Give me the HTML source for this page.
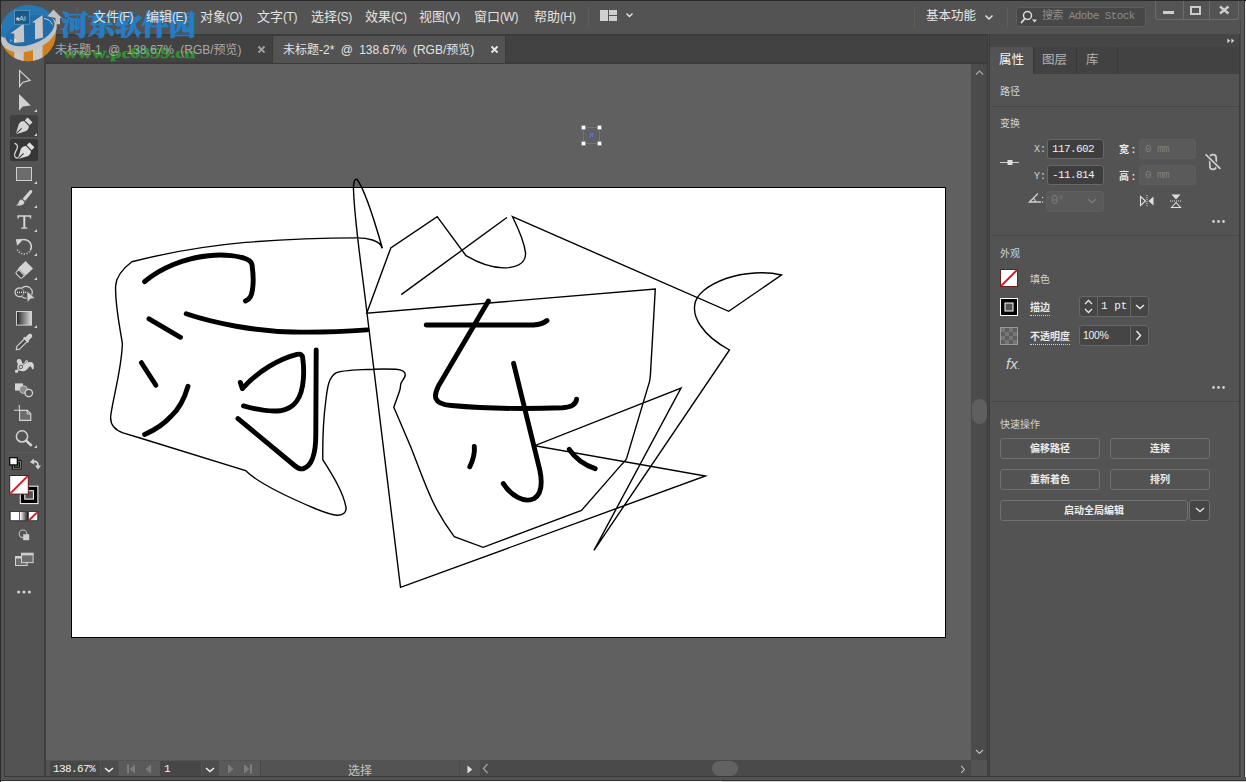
<!DOCTYPE html>
<html lang="zh-CN">
<head>
<meta charset="utf-8">
<title>Adobe Illustrator</title>
<style>
*{box-sizing:border-box;margin:0;padding:0}
html,body{width:1246px;height:782px;overflow:hidden;background:#535353}
body{position:relative;font-family:"Liberation Sans","Noto Sans CJK SC",sans-serif;font-size:12px;color:#dcdcdc}
.abs{position:absolute}
#menubar{left:0;top:0;width:1246px;height:34px;background:#535353}
#topedge{left:0;top:0;width:1246px;height:1px;background:#2a2a2a}
#leftedge{left:0;top:0;width:1px;height:782px;background:#2a2a2a}
#tabbar{left:46px;top:34px;width:943px;height:30px;background:#424242}
#canvas{left:46px;top:64px;width:925px;height:696px;background:#606060}
#artboard{left:71px;top:187px;width:875px;height:451px;background:#fff;border:1px solid #000}
.menu{top:9px;font-size:13px;color:#e2e2e2;white-space:nowrap;line-height:16px}
.tab{top:36px;height:27px;font-size:12px;line-height:28px;white-space:nowrap}

.p{font-size:10px;line-height:14px;white-space:nowrap;color:#d2d2d2}
.pb{font-weight:bold;color:#e8e8e8}
.inp{background:#3e3e3e;border:1px solid #686868;border-radius:3px;color:#f0f0f0;font-family:"Liberation Mono","Noto Sans CJK SC",monospace;font-size:11px;letter-spacing:-0.6px;line-height:18px;padding-left:4px;white-space:nowrap}
.inpd{background:#5a5a5a;border:1px solid #5e5e5e;border-radius:3px;color:#7e7e7e;font-family:"Liberation Mono","Noto Sans CJK SC",monospace;font-size:11px;letter-spacing:-0.6px;line-height:18px;padding-left:5px;white-space:nowrap}
.btn{border:1px solid #707070;border-radius:3px;height:21px;text-align:center;font-size:10px;line-height:19px;font-weight:bold;color:#ececec;white-space:nowrap}
.sep{left:991px;width:248px;height:1px;background:#474747}
.dot3{width:13px;height:3px}
.menu .l{font-size:12px;letter-spacing:-0.4px}
.tab{word-spacing:3px}
</style>
</head>
<body>
<div class="abs" id="menubar"></div>
<div class="abs" id="tabbar"></div>
<div class="abs" id="canvas"></div>
<div class="abs" id="artboard"></div>
<div class="abs" style="left:46px;top:34px;width:943px;height:2px;background:#3b3b3b"></div>
<div class="abs" style="left:46px;top:62px;width:943px;height:2px;background:#3b3b3b"></div>
<div class="abs" style="left:272px;top:36px;width:1px;height:26px;background:#3b3b3b"></div>
<div class="abs" style="left:505px;top:36px;width:1px;height:26px;background:#3b3b3b"></div>
<!-- artwork -->
<svg class="abs" style="left:46px;top:64px" width="924" height="696" viewBox="46 64 924 696">
<g fill="none" stroke="#000" stroke-width="1.4" stroke-linejoin="miter" stroke-linecap="butt">
<!-- blob around he -->
<path d="M382 248.3 C381 240 366 238 356.7 237.9 C320 238 282 239.5 245.5 242.4 C200 246.5 160 254.5 131.8 261.8 C121 270 116 278 115.6 286.1 C115 305 119.5 325 122.4 343.6 C121.5 370 113.5 395 110.7 416 C110 424 113.5 429.5 123 432.8 L140 438 L245.5 470.5 C258 483 290 498 315 508.5 C325 512.5 332 515 337 515.2 C343.5 515.5 347 512 345.8 506.5 C343 491 331 473 322.8 459.6 C322.6 445 323.2 420 325.9 400 C327.5 386 329 377 336 372.8 C342 369.8 380 368.4 396 369.3 C402 369.8 405.8 371.5 405.200 375.5 C404.6 378.5 401.6 381 400.9 383.5 C400.3 386 400.6 387 400.1 389 C398.6 395 395.6 401 393.8 407.5 C396 412 397.5 416 399.3 420 C403 429 407 438 410.8 447 C416.5 461.5 422 476.5 428.2 491.3 C435 508 444 523 454.2 536.6 L483.1 547.3 L581.5 510.4 L621.7 464.4 C624 462 626 460.5 626.6 458.4 L649.5 381.6 C650.3 378 650.5 374 650.7 370 L655.3 289 L366.7 313.2 L390.8 247.9 L437.2 216.7 L466 255.7 C480 264 496 269 508.8 267.6 C520 266 526 262 525.5 252.7 C524 240 518 228 512.5 216.7 L728.7 311.3 L781.4 275 C766 271 744 272.5 726 278.5 C708 285 695 295 694.6 306 C693.5 316 700 334 729.5 350 L594 550.3 L681 388 L534.7 445.7 L705.4 476 L400.5 587.4 L367 313 C362 270 354.8 225 353.5 190 C353.2 181 355 178.3 357 179.3 C364.500 189 376 226 382.4 248.3"/>
<path d="M401.2 294.6 L506.9 217.5"/>
</g>
<g fill="none" stroke="#000" stroke-width="4.9" stroke-linecap="round" stroke-linejoin="round">
<!-- he -->
<path d="M144.6 281.7 C160 268 185 258 208.4 255.7 C225 254 240 256 247.3 259.4 C251 261 252 263 252.1 265.7 C253 272 253.5 280 252.9 286.1 C252 296 250 299 245.5 301"/>
<path d="M186.2 313.8 C215 323.5 255 331.2 292.7 332 C315 332.5 345 331.5 367.1 329.9"/>
<path d="M149 318.8 L180.5 337.3"/>
<path d="M141.4 362.7 L155.9 385.3"/>
<path d="M188 386.3 C184 400 178 410 171.3 416 C164 424 155 430 144.6 434.5"/>
<path d="M240.3 382.4 L242.4 388.6 C258 371 280 358.5 297 354.4 C300.5 353.500 302.2 354.5 302.7 358 C303.7 365 303.9 372 303.4 378.8 C302 398 295 408.5 280 410.8 C268 412 256 409.5 243.5 405.9"/>
<path d="M316.2 350 L315.8 434.5 C315.8 455 311 466 303.500 468.6 C300.5 469.6 297.5 468 294.5 465.5 L238 418.6"/>
<!-- dong -->
<path d="M426.2 325 L533.500 325 C539 324.7 544 323 547 320.5"/>
<path d="M488.4 301 L438.3 386.3 C434 395 432 404 451.3 405.5 C490 409 530 409 562.6 407.8 C572 407 576 404 576.6 399.2"/>
<path d="M513.6 363.3 L539.8 470 C542.5 483 541.5 494 534 498.6 C524 503.5 511 495.5 503.3 483.6"/>
<path d="M474.3 446.4 C475 453 473 460 469.8 466.8"/>
<path d="M569.2 449.4 C575 458 584 465 595.2 468.7"/>
</g>
<!-- selection -->
<g fill="none" stroke="#5578d6" stroke-width="1" opacity="0.85">
<rect x="583.5" y="127.5" width="16" height="16"/>
<path d="M589.500 133 L593.500 137 M593.500 133 L589.500 137" stroke-width="1.300"/>
</g>
<g fill="#fff" stroke="#5a7be0" stroke-width="0.800">
<rect x="581.300" y="125.300" width="4.400" height="4.400"/><rect x="597.300" y="125.300" width="4.400" height="4.400"/><rect x="581.300" y="141.300" width="4.400" height="4.400"/><rect x="597.300" y="141.300" width="4.400" height="4.400"/>
</g>
</svg>
<div class="abs" style="left:61px;top:3.5px;font-family:'Noto Serif CJK SC','Noto Sans CJK SC',serif;font-weight:900;font-size:27px;line-height:40px;color:#1e84d6;-webkit-text-stroke:0.9px #1e84d6;opacity:0.88;white-space:nowrap">河东软件园</div>
<div class="abs" style="left:62.5px;top:42.6px;font-family:'Liberation Serif',serif;font-weight:bold;font-size:14.5px;line-height:20px;color:#2fa32f;-webkit-text-stroke:0.5px #2fa32f;opacity:0.78;white-space:nowrap;transform:scaleX(1.38);transform-origin:0 0">www.pc0359.cn</div>
<div class="abs" style="left:77px;top:7px;width:1px;height:20px;background:#5e5e5e"></div>
<!-- menu -->
<div class="abs menu" style="left:93px">文件<span class="l">(F)</span></div>
<div class="abs menu" style="left:146px">编辑<span class="l">(E)</span></div>
<div class="abs menu" style="left:200px">对象<span class="l">(O)</span></div>
<div class="abs menu" style="left:257px">文字<span class="l">(T)</span></div>
<div class="abs menu" style="left:311px">选择<span class="l">(S)</span></div>
<div class="abs menu" style="left:365px">效果<span class="l">(C)</span></div>
<div class="abs menu" style="left:419px">视图<span class="l">(V)</span></div>
<div class="abs menu" style="left:474px">窗口<span class="l">(W)</span></div>
<div class="abs menu" style="left:534px">帮助<span class="l">(H)</span></div>
<div class="abs" style="left:588px;top:7px;width:1px;height:20px;background:#5e5e5e"></div>
<svg class="abs" style="left:600px;top:10px" width="36" height="12" viewBox="0 0 36 12"><rect x="0" y="0" width="8" height="11" fill="#d0d0d0"/><rect x="9" y="0" width="8" height="5" fill="#d0d0d0"/><rect x="9" y="6" width="8" height="5" fill="#d0d0d0"/><path d="M26.5 3.5 L29.5 6.5 L32.5 3.5" fill="none" stroke="#e6e6e6" stroke-width="1.4"/></svg>
<!-- doc tabs -->
<div class="abs tab" style="left:46px;width:226px;color:#a8a8a8;padding-left:9px">未标题-1 @ 138.67% (RGB/预览)</div>
<div class="abs tab" style="left:273px;width:232px;background:#535353;color:#e4e4e4;padding-left:10px">未标题-2* @ 138.67% (RGB/预览)</div>
<svg class="abs" style="left:257px;top:45px" width="9" height="9" viewBox="0 0 9 9"><path d="M1.500 1.500 L7.500 7.500 M7.500 1.500 L1.500 7.500" stroke="#a0a0a0" stroke-width="1.800"/></svg>
<svg class="abs" style="left:490px;top:45px" width="9" height="9" viewBox="0 0 9 9"><path d="M1.500 1.500 L7.500 7.500 M7.500 1.500 L1.500 7.500" stroke="#e8e8e8" stroke-width="1.800"/></svg>
<div class="abs" style="left:505px;top:36px;width:1px;height:26px;background:#3b3b3b"></div>
<!-- toolbar -->
<div class="abs" style="left:1px;top:34px;width:45px;height:742px;background:#535353"></div>
<div class="abs" style="left:4px;top:34px;width:1px;height:742px;background:#3d3d3d"></div>
<div class="abs" style="left:44px;top:34px;width:2px;height:742px;background:#404040"></div>
<div class="abs" style="left:10px;top:115px;width:28px;height:22px;background:#404040;border-radius:2px"></div>
<div class="abs" style="left:10px;top:139px;width:28px;height:22px;background:#363636;border-radius:2px"></div>
<svg class="abs" style="left:0;top:64px" width="46" height="560" viewBox="0 64 46 560">
<g fill="#d4d4d4" stroke="none">
<!-- sub-tool corner triangles -->
<path d="M34 112h3v-3zM34 136h3v-3zM34 184h3v-3zM34 208h3v-3zM34 232h3v-3zM34 256h3v-3zM34 280h3v-3zM34 328h3v-3zM34 448h3v-3z"/>
</g>
<!-- selection -->
<path d="M19.6 70.6 L19.6 86.4 L23 82.2 L30 80.4 Z" fill="none" stroke="#d4d4d4" stroke-width="1.2" stroke-linejoin="miter"/>
<!-- direct selection -->
<path d="M19 94 L19 110.8 L22.8 106.4 L30.8 105.4 Z" fill="#d0d0d0"/>
<!-- pen -->
<g transform="translate(24,126) rotate(45)" fill="#d6d6d6">
<path d="M-0.700 10.500 L-5.100 2 C-5.700 -0.500 -4.400 -2.600 -3.500 -3.400 L3.500 -3.400 C4.400 -2.600 5.700 -0.500 5.100 2 L0.700 10.500 Z"/>
<rect x="-3.500" y="-8.500" width="7" height="3.900" rx="0.500"/>
<path d="M0 10.500 L0 3.400" stroke="#404040" stroke-width="1.100" fill="none"/>
</g>
<!-- curvature -->
<g transform="translate(26,150.900) rotate(45)" fill="#dedede">
<path d="M-0.700 10.500 L-5.100 2 C-5.700 -0.500 -4.400 -2.600 -3.500 -3.400 L3.500 -3.400 C4.400 -2.600 5.700 -0.500 5.100 2 L0.700 10.500 Z"/>
<rect x="-3.500" y="-8.500" width="7" height="3.900" rx="0.500"/>
<path d="M0 10.500 L0 3.400" stroke="#363636" stroke-width="1.100" fill="none"/>
</g>
<path d="M15 143.400 C17.600 144.600 18.200 146.600 16.600 149.600 C14.600 153 13.400 155.600 15.400 157.200 C16.200 157.800 17.200 158 18 157.900" fill="none" stroke="#dedede" stroke-width="1.200" stroke-linecap="round"/>
<!-- rectangle -->
<rect x="16.5" y="167.5" width="15" height="13" fill="#6c6c6c" stroke="#d0d0d0" stroke-width="1"/>
<!-- brush -->
<g fill="#d4d4d4">
<path d="M31.6 190.2 C32.6 190.8 32.4 192 31.8 192.8 L25.2 201 L22.6 198.8 L29.4 190.8 C30 190 31 189.8 31.6 190.2 Z"/>
<path d="M21.8 199.6 L24.4 201.8 C24.6 204 22.6 205.6 20 205.4 C18.6 205.4 17 205.8 15.8 205.4 C17.8 204.6 18.4 203.6 18.8 202 C19.2 200.4 20.4 199.4 21.8 199.6 Z"/>
</g>
<!-- type -->
<path d="M17.4 215.2 H31.2 V218.6 H29.8 V216.8 H25.3 V227.4 H27.4 V228.8 H21.2 V227.4 H23.3 V216.8 H18.8 V218.6 H17.4 Z" fill="#d4d4d4"/>
<!-- rotate -->
<path d="M18.600 242 A7.300 7.300 0 0 1 31.300 246.600 A7.300 7.300 0 0 1 30.300 250.300" fill="none" stroke="#d4d4d4" stroke-width="1.600"/>
<path d="M29.600 251.400 A7.300 7.300 0 0 1 16.900 248.300" fill="none" stroke="#d4d4d4" stroke-width="1.500" stroke-dasharray="1.100 1.600"/>
<path d="M15.800 239.300 L22.400 239 L20.600 242.200 L17.200 245.800 Z" fill="#d4d4d4"/>
<!-- eraser -->
<path d="M25.500 261 L33 268.500 L25.600 275.600 L18.200 268.200 Z" fill="#d4d4d4"/>
<path d="M18.600 269.400 L24.600 275.600 L22 277.900 C21.500 278.300 20.800 278.300 20.300 277.800 L16.400 273.800 C15.900 273.300 15.900 272.500 16.400 272 Z" fill="#4a4a4a" stroke="#d4d4d4" stroke-width="1.100"/>
<!-- shape builder -->
<path d="M21.500 288.400 A4.500 4.400 0 1 0 21.500 296.300 A6.200 5.900 0 1 0 21.500 288.400 Z" fill="none" stroke="#d4d4d4" stroke-width="1.200"/>
<path d="M21.500 288.400 A4.500 4.400 0 0 1 21.500 296.300" fill="none" stroke="#a0a0a0" stroke-width="0.900"/>
<path d="M17 292.400 H26.500" stroke="#e4e4e4" stroke-width="1.200" stroke-dasharray="1 1" fill="none"/>
<path d="M26.900 290.800 L35.200 298.500 L30.400 298.900 L27.300 302.800 Z" fill="#d4d4d4" stroke="#535353" stroke-width="0.700"/>
<!-- gradient -->
<defs><linearGradient id="gr1" x1="0" x2="1" y1="0" y2="0"><stop offset="0" stop-color="#262626"/><stop offset="1" stop-color="#dcdcdc"/></linearGradient>
<linearGradient id="gr2" x1="0" x2="1" y1="0" y2="0"><stop offset="0" stop-color="#ffffff"/><stop offset="1" stop-color="#1c1c1c"/></linearGradient></defs>
<rect x="16.5" y="311.5" width="15" height="13.6" fill="url(#gr1)" stroke="#d0d0d0" stroke-width="1"/>
<!-- eyedropper -->
<g transform="translate(24,342) rotate(45)">
<path d="M-1.9 -2 L-1.9 8.2 L0 11 L1.9 8.2 L1.9 -2" fill="#4a4a4a" stroke="#d4d4d4" stroke-width="1.1" stroke-linejoin="round"/>
<rect x="-3.4" y="-4.2" width="6.8" height="2.2" rx="0.6" fill="#d4d4d4"/>
<path d="M-2.2 -4 L-2.2 -8.6 C-2.2 -11.4 2.2 -11.4 2.2 -8.6 L2.2 -4 Z" fill="#d4d4d4"/>
</g>
<!-- width/warp -->
<path d="M17 362.2 C16 360.600 17.400 359.200 19.200 359.100 C21.100 359 21.600 361 22.100 362.600 C22.500 363.800 23.100 364.500 24.100 364.200 C26 363.100 28.500 361.500 31 362.100 C33.500 362.700 34.500 365.400 33.500 369 C32.700 369.700 32 369.100 31.600 368 C31.200 366.600 30.600 365.800 29.600 366.400 C28.200 367.400 27.600 369.800 24.500 370.900 C22 371.600 20 370.700 18.300 370.300 C17.300 368.500 17.100 366.400 17.700 364.400 C18 363.400 17.600 362.800 17 362.200 Z" fill="#d4d4d4"/>
<path d="M16.500 371.300 L26.600 361.700" stroke="#d4d4d4" stroke-width="1.700" fill="none"/>
<path d="M16.500 371.300 L26.600 361.700" stroke="#535353" stroke-width="0.600" fill="none"/>
<rect x="15.100" y="369.900" width="2.900" height="2.800" fill="#d4d4d4"/>
<circle cx="26.600" cy="361.700" r="1.400" fill="#d4d4d4"/><circle cx="26.600" cy="361.700" r="0.500" fill="#535353"/>
<circle cx="20.900" cy="366.900" r="1.700" fill="#d4d4d4" stroke="#555" stroke-width="0.900"/>
<path d="M19.900 367.900 L21.900 365.900" stroke="#d4d4d4" stroke-width="0.800"/>
<!-- blend -->
<rect x="15" y="383.4" width="8" height="7.2" fill="#d4d4d4"/>
<circle cx="23.6" cy="389.6" r="3.9" fill="#8c8c8c" stroke="#c4c4c4" stroke-width="0.9"/>
<circle cx="28.8" cy="393" r="3.7" fill="#535353" stroke="#d8d8d8" stroke-width="1.3"/>
<!-- artboard -->
<path d="M14 410.3 H19.6 M19.3 405 V410.6" stroke="#d4d4d4" stroke-width="1.1" fill="none"/>
<path d="M19.6 410.4 H27.4 L30.8 413.8 V420.4 H19.6 Z" fill="#6c6c6c" stroke="#d4d4d4" stroke-width="1.1"/>
<path d="M27.2 410.4 V414 H30.8" fill="none" stroke="#d4d4d4" stroke-width="1"/>
<!-- zoom -->
<circle cx="22" cy="436.4" r="5.6" fill="none" stroke="#d4d4d4" stroke-width="1.5"/>
<path d="M26.2 440.6 L31 445.2" stroke="#d4d4d4" stroke-width="2.6" stroke-linecap="round"/>
<!-- separator -->
<path d="M8 452.5 H40" stroke="#5f5f5f" stroke-width="1"/>
<!-- default fill/stroke -->
<rect x="13.2" y="461.2" width="7" height="7" fill="none" stroke="#000" stroke-width="2.6"/>
<rect x="13.2" y="461.2" width="7" height="7" fill="none" stroke="#e8e0c8" stroke-width="0.6"/>
<rect x="9.7" y="457.7" width="7.6" height="7.2" fill="#fff" stroke="#000" stroke-width="1.2"/>
<!-- swap -->
<path d="M32.4 461.6 C36.6 460.4 38.2 463 38 466" fill="none" stroke="#d4d4d4" stroke-width="1.7"/>
<path d="M30 462.2 L33.6 458.6 L34.4 464.6 Z M35 465.4 L41 465.4 L38 469.4 Z" fill="#d4d4d4"/>
<!-- stroke swatch -->
<rect x="20.3" y="486.2" width="17.6" height="17.4" fill="#000" stroke="#fff" stroke-width="1"/>
<rect x="24.8" y="490.7" width="8.6" height="8.4" fill="#535353" stroke="#fff" stroke-width="1"/>
<!-- fill swatch -->
<rect x="9.7" y="475.5" width="18.6" height="18.6" fill="#fff" stroke="#5a1a1a" stroke-width="1"/>
<path d="M10.4 493.4 L27.6 476.2" stroke="#d9141e" stroke-width="1.9"/>
<!-- small swatches -->
<rect x="10.5" y="512" width="8.6" height="8.4" fill="#fff"/>
<rect x="20" y="512" width="8" height="8.4" fill="url(#gr2)"/>
<rect x="29" y="512" width="8.4" height="8.4" fill="#fff"/>
<path d="M29.4 520 L37 512.4" stroke="#d9141e" stroke-width="1.8"/>
<rect x="10" y="511.5" width="28" height="9.4" fill="none" stroke="#3c3c3c" stroke-width="1"/>
<!-- draw mode -->
<circle cx="23" cy="533.8" r="3.8" fill="none" stroke="#bdbdbd" stroke-width="1.1"/>
<rect x="23.2" y="534.2" width="6" height="6" fill="#cfcfcf"/>
<!-- screen mode -->
<rect x="15.5" y="556.5" width="11.6" height="9" fill="#6c6c6c" stroke="#d0d0d0" stroke-width="1"/>
<rect x="15.5" y="556.5" width="11.6" height="2" fill="#d0d0d0"/>
<rect x="21.5" y="553.2" width="11.6" height="9.4" fill="#6c6c6c" stroke="#d0d0d0" stroke-width="1"/>
<rect x="21.5" y="553.2" width="11.6" height="2.2" fill="#d0d0d0"/>
<!-- dots -->
<circle cx="18.6" cy="592" r="1.6" fill="#d0d0d0"/><circle cx="24" cy="592" r="1.6" fill="#d0d0d0"/><circle cx="29.4" cy="592" r="1.6" fill="#d0d0d0"/>
</svg>
<!-- right side -->
<div class="abs" style="left:971px;top:64px;width:16px;height:696px;background:#4b4b4b"></div>
<div class="abs" style="left:972px;top:399px;width:15px;height:25px;background:#5f5f5f;border-radius:7.500px"></div>
<svg class="abs" style="left:975px;top:70px" width="9" height="5.4" viewBox="0 0 10 6"><path d="M1 5 L5 1.2 L9 5" fill="none" stroke="#a8a8a8" stroke-width="1.3"/></svg>
<svg class="abs" style="left:975px;top:749px" width="9" height="5.4" viewBox="0 0 10 6"><path d="M1 1 L5 4.8 L9 1" fill="none" stroke="#c8c8c8" stroke-width="1.3"/></svg>
<div class="abs" style="left:987px;top:34px;width:3px;height:742px;background:#3b3b3b"></div><div class="abs" style="left:988px;top:34px;width:1px;height:742px;background:#494949"></div>
<div class="abs" style="left:990px;top:34px;width:250px;height:13px;background:#464646"></div>
<div class="abs" style="left:990px;top:47px;width:250px;height:27px;background:#424242"></div>
<div class="abs" style="left:990px;top:74px;width:250px;height:702px;background:#535353"></div>
<div class="abs" style="left:990px;top:47px;width:43px;height:28px;background:#535353"></div>
<div class="abs" style="left:1033px;top:47px;width:1px;height:26px;background:#383838"></div>
<div class="abs" style="left:1076px;top:47px;width:1px;height:26px;background:#383838"></div>
<div class="abs" style="left:1117px;top:47px;width:1px;height:26px;background:#383838"></div>
<div class="abs" style="left:999px;top:51px;font-size:12.5px;line-height:18px;color:#f2f2f2">属性</div>
<div class="abs" style="left:1042px;top:51px;font-size:12.5px;line-height:18px;color:#b4b4b4">图层</div>
<div class="abs" style="left:1086px;top:51px;font-size:12.5px;line-height:18px;color:#b4b4b4">库</div>
<svg class="abs" style="left:1227px;top:38px" width="8" height="5.6" viewBox="0 0 10 7"><path d="M0.5 0.5 L4 3.5 L0.5 6.5 Z M5.5 0.5 L9 3.5 L5.5 6.5 Z" fill="#d8d8d8"/></svg>
<div class="abs" style="left:1239px;top:34px;width:1px;height:742px;background:#3c3c3c"></div>
<div class="abs p" style="left:1000px;top:85px">路径</div>
<div class="abs sep" style="top:106px"></div>
<div class="abs p" style="left:1000px;top:117px">变换</div>
<svg class="abs" style="left:1000px;top:158px" width="20" height="8" viewBox="0 0 20 8"><path d="M0 4.5 H19" stroke="#d0d0d0" stroke-width="1"/><rect x="7.5" y="2" width="5" height="5" fill="#e0e0e0"/></svg>
<div class="abs p" style="left:1034px;top:143px;font-family:'Liberation Mono',monospace">X:</div>
<div class="abs inp" style="left:1047px;top:139px;width:57px;height:20px">117.602</div>
<div class="abs p" style="left:1034px;top:170px;font-family:'Liberation Mono',monospace">Y:</div>
<div class="abs inp" style="left:1047px;top:165px;width:57px;height:20px">-11.814</div>
<div class="abs p pb" style="left:1119px;top:143px">宽 :</div>
<div class="abs inpd" style="left:1139px;top:139px;width:57px;height:20px">0 mm</div>
<div class="abs p pb" style="left:1119px;top:170px">高 :</div>
<div class="abs inpd" style="left:1139px;top:165px;width:57px;height:20px">0 mm</div>
<svg class="abs" style="left:1203px;top:151px" width="22" height="24" viewBox="1203 151 22 24"><rect x="1209.800" y="154.600" width="6.400" height="14.800" rx="3.200" fill="none" stroke="#d0d0d0" stroke-width="1.700"/><path d="M1205.600 154.400 L1220.500 168.800" stroke="#535353" stroke-width="4"/><path d="M1205.600 154.400 L1220.500 168.800" stroke="#d0d0d0" stroke-width="1.600"/></svg>
<svg class="abs" style="left:1028px;top:192px" width="16" height="14" viewBox="0 0 16 14"><path d="M10 1.500 L1.500 10 H13" fill="none" stroke="#cfcfcf" stroke-width="1.300" stroke-linejoin="miter"/><path d="M5.300 6.200 A5.500 5.500 0 0 1 7.600 10" fill="none" stroke="#cfcfcf" stroke-width="1.100"/><circle cx="14.600" cy="5.500" r="0.750" fill="#cfcfcf"/><circle cx="14.600" cy="10" r="0.750" fill="#cfcfcf"/></svg>
<div class="abs inpd" style="left:1046px;top:191px;width:58px;height:21px;line-height:19px;padding-left:4px;font-size:12px">0&#176;</div>
<svg class="abs" style="left:1087px;top:198px" width="10" height="6" viewBox="0 0 10 6"><path d="M1 1 L5 4.600 L9 1" fill="none" stroke="#7a7a7a" stroke-width="1.300"/></svg>
<svg class="abs" style="left:1139px;top:193px" width="16" height="16" viewBox="0 0 16 16"><path d="M1.500 3.500 L6.500 8 L1.500 12.500 Z" fill="none" stroke="#e0e0e0" stroke-width="1.100"/><path d="M14.500 3.500 L9.500 8 L14.500 12.500 Z" fill="#e0e0e0"/><path d="M8 2 V14" stroke="#e0e0e0" stroke-width="1" stroke-dasharray="1 1"/></svg>
<svg class="abs" style="left:1168px;top:193px" width="16" height="16" viewBox="0 0 16 16"><path d="M3.500 1.500 L8 6.500 L12.500 1.500 Z" fill="#e0e0e0"/><path d="M3.500 14.500 L8 9.500 L12.500 14.500 Z" fill="none" stroke="#e0e0e0" stroke-width="1.100"/><path d="M2 8 H14" stroke="#e0e0e0" stroke-width="1" stroke-dasharray="1 1"/></svg>
<svg class="abs dot3" style="left:1212px;top:220px" viewBox="0 0 13 3"><circle cx="1.500" cy="1.500" r="1.400" fill="#d0d0d0"/><circle cx="6.500" cy="1.500" r="1.400" fill="#d0d0d0"/><circle cx="11.500" cy="1.500" r="1.400" fill="#d0d0d0"/></svg>
<div class="abs sep" style="top:235px"></div>
<div class="abs p" style="left:1000px;top:247px">外观</div>
<svg class="abs" style="left:1000px;top:269px" width="18" height="18" viewBox="0 0 18 18"><rect x="0.500" y="0.500" width="17" height="17" fill="#fff" stroke="#6a2020" stroke-width="1"/><path d="M1 17 L17 1" stroke="#d9141e" stroke-width="1.800"/></svg>
<div class="abs p" style="left:1030px;top:273px">填色</div>
<svg class="abs" style="left:1000px;top:298px" width="18" height="18" viewBox="0 0 18 18"><rect x="0.500" y="0.500" width="17" height="17" fill="#000" stroke="#fff" stroke-width="1"/><rect x="5" y="5" width="8" height="8" fill="#535353" stroke="#fff" stroke-width="1"/></svg>
<div class="abs p pb" style="left:1030px;top:301px;border-bottom:1px dotted #d0d0d0;height:15px">描边</div>
<div class="abs" style="left:1079px;top:296px;width:70px;height:21px;background:#454545;border:1px solid #676767;border-radius:3px"></div>
<div class="abs" style="left:1097px;top:297px;width:1px;height:19px;background:#676767"></div>
<div class="abs" style="left:1130px;top:297px;width:1px;height:19px;background:#676767"></div>
<svg class="abs" style="left:1084px;top:299px" width="9" height="15" viewBox="0 0 9 15"><path d="M1 5 L4.500 1.500 L8 5 M1 10 L4.500 13.500 L8 10" fill="none" stroke="#e8e8e8" stroke-width="1.300"/></svg>
<div class="abs" style="left:1101px;top:298px;font-family:'Liberation Mono',monospace;font-size:11px;line-height:16px;color:#f0f0f0;white-space:pre">1 pt</div>
<svg class="abs" style="left:1135px;top:304px" width="10" height="6" viewBox="0 0 10 6"><path d="M1 1 L5 4.600 L9 1" fill="none" stroke="#e8e8e8" stroke-width="1.400"/></svg>
<svg class="abs" style="left:1000px;top:327px" width="18" height="18" viewBox="0 0 18 18"><rect x="0.500" y="0.500" width="17" height="17" fill="#5e5e5e" stroke="#9a9a9a" stroke-width="1"/><g fill="#777"><rect x="1" y="1" width="4" height="4"/><rect x="9" y="1" width="4" height="4"/><rect x="5" y="5" width="4" height="4"/><rect x="13" y="5" width="4" height="4"/><rect x="1" y="9" width="4" height="4"/><rect x="9" y="9" width="4" height="4"/><rect x="5" y="13" width="4" height="4"/><rect x="13" y="13" width="4" height="4"/></g></svg>
<div class="abs p pb" style="left:1030px;top:330px;border-bottom:1px dotted #d0d0d0;height:15px">不透明度</div>
<div class="abs" style="left:1079px;top:325px;width:70px;height:21px;background:#454545;border:1px solid #676767;border-radius:3px"></div>
<div class="abs" style="left:1130px;top:326px;width:1px;height:19px;background:#676767"></div>
<div class="abs" style="left:1083px;top:327px;font-family:'Liberation Sans',sans-serif;font-size:10.5px;letter-spacing:-0.3px;line-height:16px;color:#f0f0f0">100%</div>
<svg class="abs" style="left:1135px;top:330px" width="7" height="11" viewBox="0 0 7 11"><path d="M1.500 1 L5.500 5.500 L1.500 10" fill="none" stroke="#e8e8e8" stroke-width="1.500"/></svg>
<div class="abs" style="left:1006px;top:354px;font-family:'Liberation Sans',sans-serif;font-style:italic;font-size:15px;line-height:20px;color:#d4d4d4">fx<span style="font-size:9px">.</span></div>
<svg class="abs dot3" style="left:1212px;top:386px" viewBox="0 0 13 3"><circle cx="1.500" cy="1.500" r="1.400" fill="#d0d0d0"/><circle cx="6.500" cy="1.500" r="1.400" fill="#d0d0d0"/><circle cx="11.500" cy="1.500" r="1.400" fill="#d0d0d0"/></svg>
<div class="abs sep" style="top:401px"></div>
<div class="abs p" style="left:1000px;top:418px">快速操作</div>
<div class="abs btn" style="left:1000px;top:438px;width:100px">偏移路径</div>
<div class="abs btn" style="left:1110px;top:438px;width:100px">连接</div>
<div class="abs btn" style="left:1000px;top:469px;width:100px">重新着色</div>
<div class="abs btn" style="left:1110px;top:469px;width:100px">排列</div>
<div class="abs btn" style="left:1000px;top:500px;width:188px">启动全局编辑</div>
<div class="abs btn" style="left:1189px;top:500px;width:21px;background:#454545"></div>
<svg class="abs" style="left:1195px;top:507px" width="10" height="6" viewBox="0 0 10 6"><path d="M1 1 L5 4.600 L9 1" fill="none" stroke="#e0e0e0" stroke-width="1.400"/></svg>
<!-- top right -->
<div class="abs" style="left:914px;top:7px;width:1px;height:20px;background:#5e5e5e"></div>
<div class="abs" style="left:926px;top:7px;font-size:12.5px;line-height:18px;color:#e6e6e6;white-space:nowrap">基本功能</div>
<svg class="abs" style="left:984px;top:14px" width="10" height="7" viewBox="0 0 10 7"><path d="M1.500 1.500 L5 5 L8.500 1.500" fill="none" stroke="#e6e6e6" stroke-width="1.500"/></svg>
<div class="abs" style="left:1007px;top:7px;width:1px;height:20px;background:#5e5e5e"></div>
<div class="abs" style="left:1016px;top:7px;width:130px;height:20px;background:#474747;border:1px solid #5e5e5e;border-radius:3px"></div>
<svg class="abs" style="left:1020px;top:10px" width="18" height="14" viewBox="0 0 18 14"><circle cx="7.500" cy="5.500" r="4" fill="none" stroke="#dcdcdc" stroke-width="1.500"/><path d="M4.800 8.600 L1.500 12.500" stroke="#dcdcdc" stroke-width="1.800" stroke-linecap="round"/><path d="M12 9.500 H17 L14.500 12.500 Z" fill="#dcdcdc"/></svg>
<div class="abs" style="left:1042px;top:8px;font-family:'Liberation Mono','Noto Sans CJK SC',monospace;font-size:11px;letter-spacing:-0.6px;line-height:17px;color:#8c8c8c;white-space:pre">搜索 Adobe Stock</div>
<div class="abs" style="left:1155px;top:0;width:84px;height:20px;border:1px solid #6c6c6c;border-top:none;border-radius:0 0 3px 3px;background:#545454"></div>
<div class="abs" style="left:1183px;top:1px;width:1px;height:18px;background:#6c6c6c"></div>
<div class="abs" style="left:1209px;top:1px;width:1px;height:18px;background:#6c6c6c"></div>
<div class="abs" style="left:1163px;top:11px;width:11px;height:3px;background:#cccccc"></div>
<div class="abs" style="left:1190px;top:6px;width:11px;height:9px;border:2px solid #cccccc"></div>
<svg class="abs" style="left:1219px;top:5px" width="11" height="10" viewBox="0 0 11 10"><path d="M1 1.500 L9.500 8.500 M9.500 1.500 L1 8.500" stroke="#cccccc" stroke-width="2.300"/></svg>
<div class="abs" style="left:1240px;top:20px;width:1px;height:757px;background:#464646"></div>
<div class="abs" style="left:1241px;top:1px;width:3px;height:779px;background:#575757"></div>
<div class="abs" style="left:1244px;top:0;width:1px;height:782px;background:#383838"></div>
<div class="abs" style="left:1245px;top:0;width:1px;height:782px;background:#f0f0f0"></div>
<!-- bottom bar -->
<div class="abs" style="left:46px;top:760px;width:434px;height:16px;background:#535353"></div>
<div class="abs" style="left:480px;top:760px;width:491px;height:16px;background:#4a4a4a"></div>
<div class="abs" style="left:971px;top:760px;width:16px;height:16px;background:#535353"></div>
<div class="abs" style="left:712px;top:761px;width:26px;height:15px;background:#626262;border-radius:7.500px"></div>
<div class="abs" style="left:50px;top:761px;width:50px;height:15px;background:#474747;border-radius:2px 0 0 2px"></div>
<div class="abs" style="left:101px;top:761px;width:17px;height:15px;background:#4c4c4c;border-radius:0 2px 2px 0"></div>
<div class="abs" style="left:119px;top:761px;width:41px;height:15px;background:#5a5a5a"></div>
<div class="abs" style="left:160px;top:761px;width:41px;height:15px;background:#474747;border-radius:2px 0 0 2px"></div>
<div class="abs" style="left:202px;top:761px;width:17px;height:15px;background:#4c4c4c;border-radius:0 2px 2px 0"></div>
<div class="abs" style="left:219px;top:761px;width:41px;height:15px;background:#5a5a5a"></div>
<div class="abs" style="left:260px;top:761px;width:1px;height:15px;background:#484848"></div><div class="abs" style="left:459px;top:761px;width:1px;height:15px;background:#4a4a4a"></div>
<div class="abs" style="left:53px;top:762px;font-family:'Liberation Mono',monospace;font-size:11px;letter-spacing:-0.600px;line-height:15px;color:#f4f4f4">138.67%</div>
<div class="abs" style="left:164px;top:762px;font-family:'Liberation Mono',monospace;font-size:11px;line-height:15px;color:#f4f4f4">1</div>
<svg class="abs" style="left:104px;top:767px" width="10" height="6" viewBox="0 0 10 6"><path d="M1 1 L5 4.600 L9 1" fill="none" stroke="#f0f0f0" stroke-width="1.500"/></svg>
<svg class="abs" style="left:205px;top:767px" width="10" height="6" viewBox="0 0 10 6"><path d="M1 1 L5 4.600 L9 1" fill="none" stroke="#f0f0f0" stroke-width="1.500"/></svg>
<svg class="abs" style="left:126px;top:764px" width="28" height="10" viewBox="0 0 28 10"><path d="M1 0.500 H3 V9.500 H1 Z M9 0.500 V9.500 L3.500 5 Z M25 0.500 V9.500 L19.500 5 Z" fill="#7c7c7c"/></svg>
<svg class="abs" style="left:226px;top:764px" width="28" height="10" viewBox="0 0 28 10"><path d="M2 0.500 V9.500 L7.500 5 Z M18 0.500 V9.500 L23.500 5 Z M24 0.500 H26 V9.500 H24 Z" fill="#7c7c7c"/></svg>
<div class="abs" style="left:348px;top:764px;font-size:12px;line-height:15px;color:#c4c4c4">选择</div>
<svg class="abs" style="left:466.500px;top:764.500px" width="5.700" height="9" viewBox="0 0 7 11"><path d="M0.500 0.500 V10.500 L6.500 5.500 Z" fill="#e0e0e0"/></svg>
<svg class="abs" style="left:482px;top:763px" width="7" height="11" viewBox="0 0 7 11"><path d="M5.500 1 L1.500 5.500 L5.500 10" fill="none" stroke="#a0a0a0" stroke-width="1.300"/></svg>
<svg class="abs" style="left:960px;top:764.500px" width="5.6" height="8.800" viewBox="0 0 7 11"><path d="M1.500 1 L5.500 5.500 L1.500 10" fill="none" stroke="#c4c4c4" stroke-width="1.300"/></svg>
<div class="abs" style="left:4px;top:776px;width:1236px;height:1px;background:#3a3a3a"></div>
<div class="abs" style="left:0;top:777px;width:1246px;height:3px;background:#535353"></div>
<div class="abs" style="left:0;top:780px;width:1246px;height:1px;background:#343434"></div>
<div class="abs" style="left:0;top:781px;width:722px;height:1px;background:#f4f4f4"></div>
<div class="abs" style="left:722px;top:781px;width:524px;height:1px;background:#d0d0d0"></div>
<!-- app icon + watermark -->
<div class="abs" style="left:14px;top:10px;width:16px;height:15px;background:#2b1d07;border:1px solid #d98a2a;color:#f29a2a;font-family:'Liberation Sans',sans-serif;font-size:9px;line-height:13px;text-align:right;padding-right:1px">Ai</div>
<svg class="abs" style="left:0;top:0;opacity:0.86" width="70" height="66" viewBox="0 0 70 66">
<defs><clipPath id="lc"><circle cx="28" cy="33.500" r="28"/></clipPath></defs>
<g clip-path="url(#lc)">
<rect x="0" y="0" width="60" height="66" fill="#e58a1c"/>
<rect x="14.300" y="48" width="9.400" height="14" fill="#dcdcdc"/>
<rect x="33" y="45" width="9.500" height="17" fill="#dcdcdc"/>
<g fill="#1f7fc4">
<g transform="translate(0,-8) rotate(-21 29 33)"><ellipse cx="29" cy="33" rx="29" ry="17.500"/></g>
<g transform="translate(0,-16) rotate(-21 29 33)"><ellipse cx="29" cy="33" rx="29" ry="17.500"/></g>
<g transform="translate(0,-24) rotate(-21 29 33)"><ellipse cx="29" cy="33" rx="29" ry="17.500"/></g>
<g transform="translate(0,-32) rotate(-21 29 33)"><ellipse cx="29" cy="33" rx="29" ry="17.500"/></g>
<g transform="translate(0,-40) rotate(-21 29 33)"><ellipse cx="29" cy="33" rx="29" ry="17.500"/></g>
</g>
</g>
<g transform="rotate(-21 29 33)"><ellipse cx="29" cy="33" rx="29" ry="17.500" fill="#d6d6d6"/><ellipse cx="30.800" cy="30.600" rx="25.800" ry="14.200" fill="#1b72b8"/></g>
<path d="M0.500 36 C1 20 12 8 27 5.500 C40 4.500 50 10 53 19 C36 8 14 20 4.500 38 Z" fill="#1f7fc4"/>
<path d="M10.300 33.600 L23.800 23.600 L24.200 42 L14.300 43 L14.300 33.600 Z" fill="#d9d9d9"/>
<path d="M31.800 22.400 L42.600 15 L43 37.500 L35 39.600 L35 22.400 Z" fill="#d9d9d9"/>
<path d="M47.400 16.200 L53.400 9.600 L61.800 18 L60 18 L60 24.300 L55.500 24.300 L55.500 18 Z" fill="#d4d4d4"/>
<path d="M44 18.500 C48 19 51 21 52.500 24.500" fill="none" stroke="#e4e4e4" stroke-width="1"/>
<rect x="14.500" y="10.500" width="15" height="13.700" fill="#15629c" stroke="#4a9ad4" stroke-width="0.700"/>
<text x="19" y="20.500" font-family="Liberation Sans, sans-serif" font-size="7.500" fill="#d0e4f4">Ai</text>
<path d="M17.800 16.500 l0.700 1.500 l1.600 0.200 l-1.200 1.100 l0.300 1.600 l-1.400 -0.800 l-1.400 0.800 l0.300 -1.600 l-1.200 -1.100 l1.600 -0.200 z" fill="#e8eef4"/>
<path d="M10 39 l3 1.600 l-3 1.600 z" fill="#5aa8e0"/><path d="M14 38.500 l3.500 2 l-3.500 2 z" fill="#f0f0f0"/>
</svg>
<div class="abs" id="topedge"></div>
<div class="abs" id="leftedge"></div>
</body>
</html>
